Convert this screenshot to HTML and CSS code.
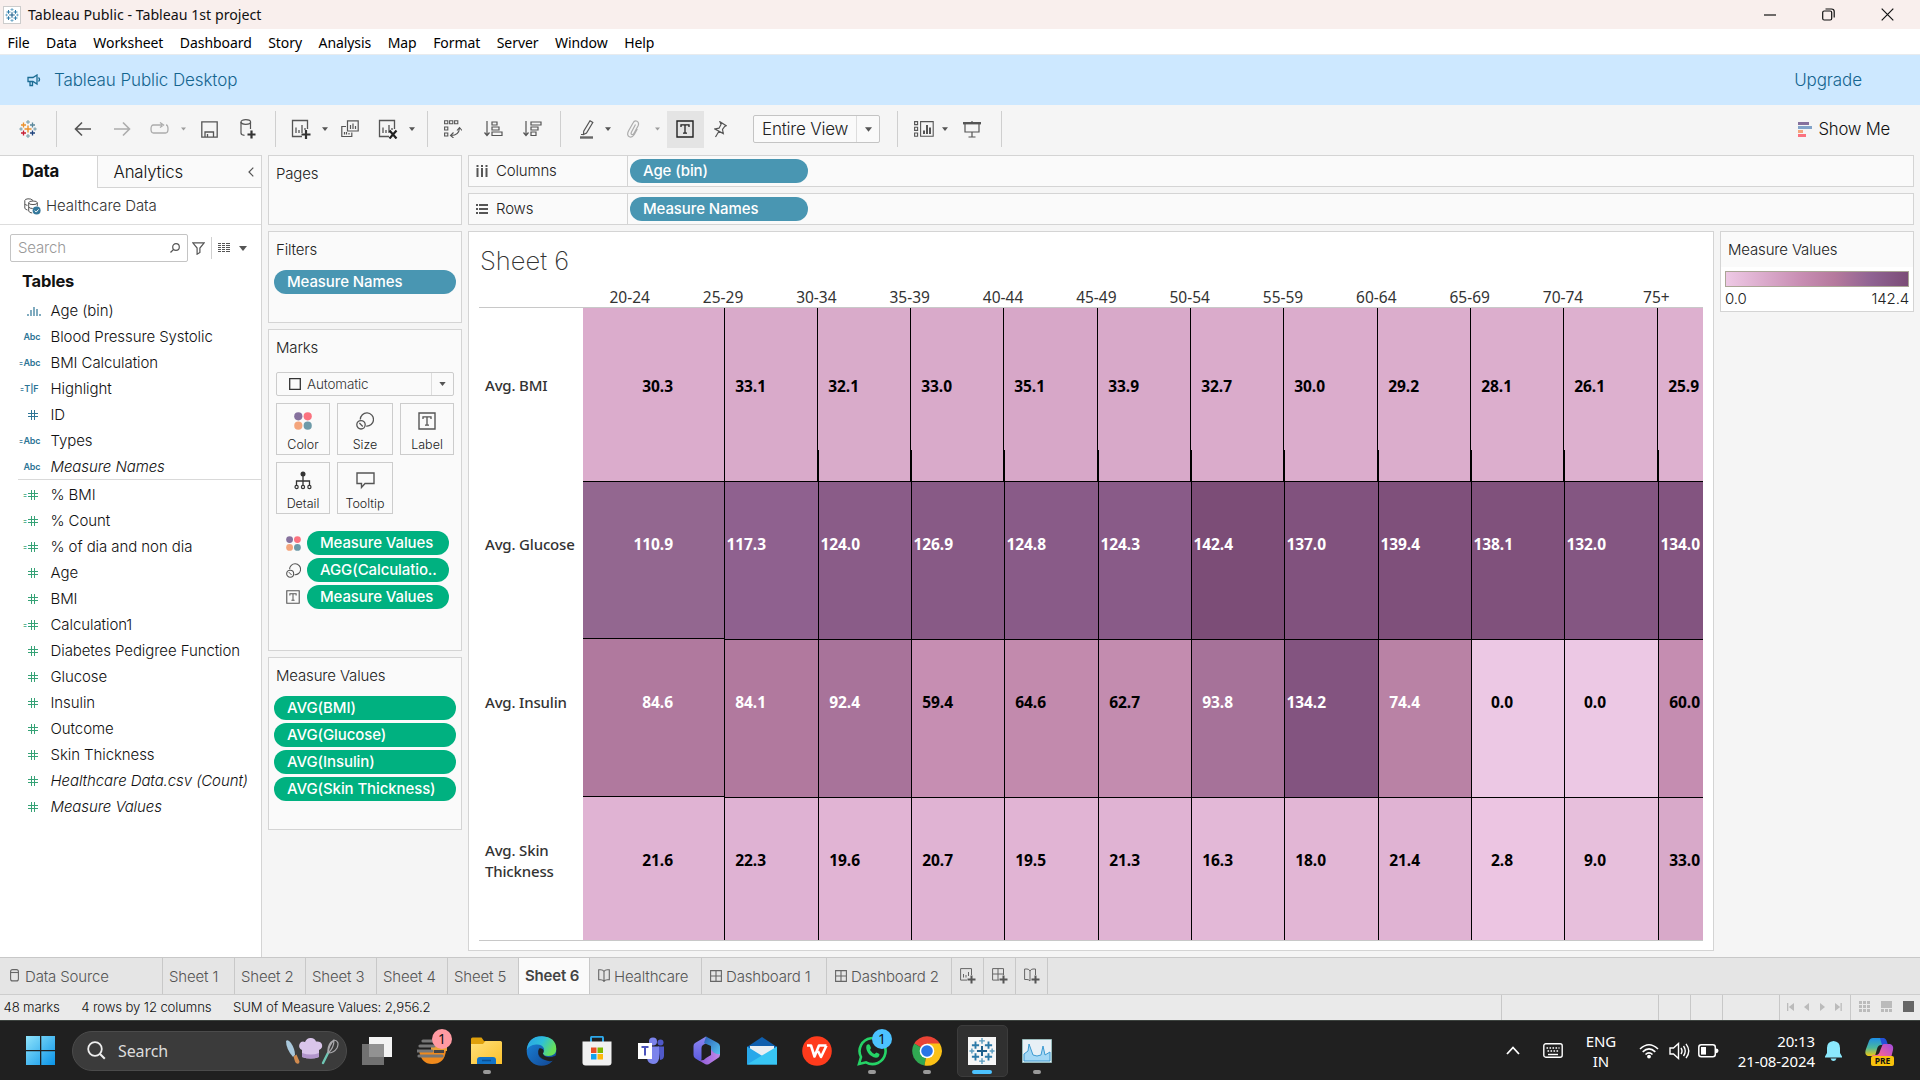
FILE: index.html
```
<!DOCTYPE html>
<html lang="en">
<head>
<meta charset="utf-8">
<title>Tableau Public - Tableau 1st project</title>
<link rel="stylesheet" href="styles.css">
</head>
<body>
<svg class="defs" width="0" height="0">
  <symbol id="caret" viewBox="0 0 8 5"><path d="M0 0h8L4 5z" fill="currentColor"/></symbol>
  <symbol id="hash" viewBox="0 0 10 10"><path d="M3.5 0v10M6.5 0v10M0 3.5h10M0 6.5h10" stroke="currentColor" fill="none"/></symbol>
  <symbol id="tlogo" viewBox="0 0 18 18">
    <path d="M9 5.5v7M5.5 9h7" stroke="var(--c1,#eb912c)" stroke-width="1.4"/>
    <path d="M4.5 2.5v5M2 5h5" stroke="var(--c2,#eb912c)" stroke-width="1.3"/>
    <path d="M13.5 2.5v5M11 5h5" stroke="var(--c3,#59879b)" stroke-width="1.3"/>
    <path d="M4.5 10.5v5M2 13h5" stroke="var(--c4,#c72035)" stroke-width="1.3"/>
    <path d="M13.5 10.5v5M11 13h5" stroke="var(--c5,#1f447e)" stroke-width="1.3"/>
    <path d="M9 0v4M7 2h4M9 14v4M7 16h4M2 7.3v3.4M.3 9h3.4M16 7.3v3.4M14.3 9h3.4" stroke="var(--c6,#7199a6)"/>
  </symbol>
  <symbol id="dots" viewBox="0 0 18 18"><circle cx="4.3" cy="4.3" r="4.1" fill="#86719d"/><circle cx="13.7" cy="4.3" r="4.1" fill="#fb727f"/><circle cx="4.3" cy="13.7" r="4.1" fill="#f4a57c"/><circle cx="13.7" cy="13.7" r="4.1" fill="#6d9aa8"/></symbol>
  <symbol id="size" viewBox="0 0 18 18"><path d="M4.3 7.5a6.6 6.6 0 1 1 5.9 6.6" fill="none" stroke="#555" stroke-width="1.3"/><circle cx="5" cy="12.8" r="4.2" fill="none" stroke="#555" stroke-width="1.3"/><path d="M3.4 11l3.4 3.5" stroke="#555" stroke-width="1.2"/></symbol>
  <symbol id="tbox" viewBox="0 0 18 18"><path d="M1 1h16v16H1z" fill="none" stroke="currentColor" stroke-width="1.4"/><path d="M5 7V4.8h8V7M9 5v8.2M7 13.2h4" fill="none" stroke="currentColor" stroke-width="1.3"/></symbol>
  <symbol id="sheet" viewBox="0 0 20 20"><path d="M16.5 10V1.5h-15v16H11M5 8.5V14M8 11v3M11 6v8M14 9v2" fill="none" stroke="currentColor" stroke-width="1.3"/></symbol>
  <symbol id="dash" viewBox="0 0 12 12"><path d="M.6.6h10.8v10.8H.6zM6 .6v10.8M.6 6h10.8" fill="none" stroke="#666" stroke-width="1.1"/></symbol>
  <symbol id="book" viewBox="0 0 12 13"><path d="M6 2.5v10M.7.8h1.8Q5 .8 6 2.5 7 .8 9.5.8h1.8v10H9.5Q7 10.8 6 12.4 5 10.8 2.500 10.800H.7z" fill="none" stroke="#666" stroke-width="1.1"/></symbol>
  <linearGradient id="gwin" x1="0" y1="0" x2="1" y2="1"><stop offset="0" stop-color="#8fe3fb"/><stop offset="1" stop-color="#0a94e8"/></linearGradient>
  <linearGradient id="gfold" x1="0" y1="0" x2="1" y2="1"><stop offset="0" stop-color="#ffe07a"/><stop offset="1" stop-color="#fcc12c"/></linearGradient>
  <linearGradient id="gedge" x1="0" y1="0" x2="1" y2=".4"><stop offset="0" stop-color="#2a9fe8"/><stop offset=".55" stop-color="#2ec0d8"/><stop offset="1" stop-color="#66e05a"/></linearGradient>
  <linearGradient id="gedge2" x1="0" y1="0" x2="1" y2="1"><stop offset="0" stop-color="#1a86dc"/><stop offset="1" stop-color="#12438f"/></linearGradient>
  <linearGradient id="g365a" x1="0" y1="0" x2="0" y2="1"><stop offset="0" stop-color="#8f86f0"/><stop offset="1" stop-color="#5a5be0"/></linearGradient>
  <linearGradient id="g365b" x1="0" y1="0" x2="1" y2="0"><stop offset="0" stop-color="#8d5ad8"/><stop offset="1" stop-color="#c48ae8"/></linearGradient>
  <linearGradient id="g365c" x1="0" y1="0" x2="1" y2="1"><stop offset="0" stop-color="#2b62b8"/><stop offset="1" stop-color="#58c4f0"/></linearGradient>
  <linearGradient id="gcop" x1="0" y1="0" x2="0" y2="1"><stop offset="0" stop-color="#1d8fe8"/><stop offset=".55" stop-color="#4cb89c"/><stop offset="1" stop-color="#f2c80f"/></linearGradient>
  <linearGradient id="gcop2" x1="1" y1="0" x2="0" y2="1"><stop offset="0" stop-color="#a04be0"/><stop offset=".6" stop-color="#f0609a"/><stop offset="1" stop-color="#f68b5a"/></linearGradient>
</svg>

<header class="titlebar">
  <span class="appicon"><svg class="blue-logo" width="14" height="14"><use href="#tlogo"/></svg></span>
  <span class="title">Tableau Public - Tableau 1st project</span>
  <div class="winbtns">
    <svg width="12" height="12"><path d="M0 6h12" stroke="#111" stroke-width="1.2"/></svg>
    <svg width="13" height="13"><rect x=".7" y="3" width="9" height="9" rx="1.5" fill="none" stroke="#111" stroke-width="1.2"/><path d="M3.500 1h6Q12.200 1 12.200 3.500v6" fill="none" stroke="#111" stroke-width="1.200"/></svg>
    <svg width="13" height="13"><path d="M.7.7l11.6 11.6M12.300.7L.7 12.300" stroke="#111" stroke-width="1.200"/></svg>
  </div>
</header>
<nav class="menubar"><span>File</span><span>Data</span><span>Worksheet</span><span>Dashboard</span><span>Story</span><span>Analysis</span><span>Map</span><span>Format</span><span>Server</span><span>Window</span><span>Help</span></nav>
<div class="banner">
  <svg width="14" height="13"><path d="M1 3.500h5L10 1v9L6 7.500H1zM3 7.500v4h2.500v-4M11.500 3.500q2 2 0 4" fill="none" stroke="#1a6b93" stroke-width="1.300"/></svg>
  <span>Tableau Public Desktop</span><span class="upgrade">Upgrade</span>
</div>

<div class="toolbar">
  <i></i>
  <svg width="18" height="20"><use href="#tlogo"/></svg>
  <b class="sep"></b>
  <svg width="17" height="16"><path d="M17 8H1.500M8 1.500L1.500 8 8 14.500" fill="none" stroke="#555" stroke-width="1.600"/></svg>
  <svg width="17" height="16" class="dim"><path d="M0 8h15.500M9 1.500L15.500 8 9 14.500" fill="none" stroke="#555" stroke-width="1.600"/></svg>
  <svg width="19" height="14" class="dim"><path d="M12 3H3.500Q1 3 1 7t2.500 4h12Q18 11 18 7t-2-4M10 .5L13.500 3 10 5.500" fill="none" stroke="#555" stroke-width="1.300"/></svg>
  <svg width="5" height="4" class="dim"><use href="#caret"/></svg>
  <svg width="17" height="17"><path d="M.8.8h15.400v15.400H.8zM4 16v-5h8.500v5M6.500 16v-3" fill="none" stroke="#555" stroke-width="1.300"/></svg>
  <svg width="17" height="20" viewBox="-1 0 17 20"><path d="M1 3v11q0 2 3.500 2.300M10.500 3v7" fill="none" stroke="#555" stroke-width="1.200"/><ellipse cx="5.800" cy="3" rx="4.800" ry="2.300" fill="none" stroke="#555" stroke-width="1.200"/><path d="M11.500 11.500v8M7.500 15.500h8" stroke="#333" stroke-width="2.200"/></svg>
  <b class="sep"></b>
  <svg width="20" height="20" class="ic"><use href="#sheet"/><path d="M15 11v9M10.500 15.500h9" stroke="#333" stroke-width="2.200"/></svg>
  <svg width="6" height="4" class="ic"><use href="#caret"/></svg>
  <svg width="18" height="18"><path d="M6.500 11V.8h10.700V11zM5 6.500H.8v10h10V12.500M9.500 5v4M12 3.500V9M14.500 6v3M3.500 12v2.500M5.500 12v2.500M8 13v1.500" fill="none" stroke="#555" stroke-width="1.200"/></svg>
  <svg width="20" height="20" class="ic"><use href="#sheet"/><path d="M11.500 11.500l7 8M18.500 11.500l-7 8" stroke="#222" stroke-width="2.200"/></svg>
  <svg width="6" height="4" class="ic"><use href="#caret"/></svg>
  <b class="sep"></b>
  <svg width="18" height="18"><path d="M.6.8h3.200v3H.6zM5.600.8h3.200v3H5.600zM10.600.8h3.200v3h-3.200zM.6 7h3.200v3H.6zM.6 13h3.200v3H.6zM7 15.500q8 0 8.500-7.500M9.500 12.500L6.500 15.500l3 2.500M13 10.500L15.500 7.500 18 10.500" fill="none" stroke="#555" stroke-width="1.100"/></svg>
  <svg width="19" height="16"><path d="M3 0v14M.5 11.500L3 14.500l2.500-3M8 1h5v3H8zM8 6h7v3H8zM8 11h10v3.500H8z" fill="none" stroke="#555" stroke-width="1.200"/></svg>
  <svg width="19" height="16"><path d="M3 0v14M.5 11.500L3 14.500l2.500-3M8 1h10v3H8zM8 6h7v3H8zM8 11h5v3.500H8z" fill="none" stroke="#555" stroke-width="1.200"/></svg>
  <b class="sep"></b>
  <svg width="14" height="19"><path d="M10 .8l2.800 1.700L6.500 13l-3 1.500.2-3.200zM3.500 14.500H1" fill="none" stroke="#555" stroke-width="1.200"/><path d="M0 17.500h13" stroke="#666" stroke-width="2.400"/></svg>
  <svg width="6" height="4" class="ic"><use href="#caret"/></svg>
  <svg width="14" height="18" class="dim"><path d="M9.500 4.500L5.500 12q-1 2 .3 2.500t2.200-1.200L12 6q1.500-3.500-1-4.700T7 3L2.500 11q-2 4.500.8 5.700t5-2.200l3-5.500" fill="none" stroke="#555" stroke-width="1.200"/></svg>
  <svg width="5" height="4" class="dim"><use href="#caret"/></svg>
  <span class="tbtn"><svg width="18" height="18"><use href="#tbox"/></svg></span>
  <svg width="13" height="17"><path d="M6 .8l6.200 4-1.500.7L8.500 8.500l.8 4L1 8l4-.8L7 3.500zM4.800 10.500L1.500 16" fill="none" stroke="#555" stroke-width="1.200"/></svg>
  <i></i>
  <span class="combo"><span>Entire View</span><em><svg width="7" height="5" class="ic"><use href="#caret"/></svg></em></span>
  <b class="sep"></b>
  <svg width="20" height="16"><path d="M.6.600h3v3H.6zM.6 6.200h3v3.200H.6zM.6 12h3v3.200H.6zM6.600.600h12.600v14.700H6.600z" fill="none" stroke="#555" stroke-width="1.100"/><path d="M10 13V9.500M13 13V4M16 13V6.500" stroke="#555" stroke-width="2"/></svg>
  <svg width="6" height="4" class="ic"><use href="#caret"/></svg>
  <svg width="18" height="17"><path d="M0 2.200h18" stroke="#555" stroke-width="2.400"/><path d="M9 0v2M2 3v8h14V3M9 11v5M5.500 16h7" fill="none" stroke="#555" stroke-width="1.200"/></svg>
  <b class="sep"></b>
  <div class="showme"><svg width="14" height="15"><path d="M0 0h11v3H0z" fill="#86719d"/><path d="M0 4h14v3H0z" fill="#82a3c9"/><path d="M0 8h5v3H0z" fill="#f4a57c"/><path d="M0 12h8v3H0z" fill="#fb727f"/></svg><span>Show Me</span></div>
</div>

<main class="work">
  <aside class="datapane">
    <div class="ptabs"><div class="ptab on">Data</div><div class="ptab">Analytics<svg width="6" height="10"><path d="M5.300.7L1 5l4.300 4.300" fill="none" stroke="#555" stroke-width="1.200"/></svg></div></div>
    <div class="source"><svg width="17" height="17" viewBox="0 0 17 17"><path d="M9 2.500Q7 .5 4 .8 1 1 .8 2.500V10q.3 1.600 2.700 2M.8 6q.6 1.300 2.700 1.300" fill="none" stroke="#555"/><ellipse cx="9" cy="4.800" rx="4.300" ry="1.800" fill="none" stroke="#555"/><path d="M4.700 4.800v8.200q.5 1.800 3.500 2M4.700 9q1 1.500 4 1.500M13.300 4.800v3.500" fill="none" stroke="#555"/><circle cx="12.600" cy="12.600" r="4" fill="#34789b"/><path d="M10.800 12.600l1.400 1.500 2.400-2.700" fill="none" stroke="#fff"/></svg><span>Healthcare Data</span></div>
    <div class="searchrow">
      <div class="sbox"><span>Search</span><svg width="10" height="10"><circle cx="6" cy="4" r="3.300" fill="none" stroke="#555" stroke-width="1.200"/><path d="M3.600 6.400L.5 9.500" stroke="#555" stroke-width="1.300"/></svg></div>
      <svg class="funnel" width="13" height="13"><path d="M.8.8h11.400L7.900 6v4.500l-2.800 1.700V6z" fill="none" stroke="#555" stroke-width="1.200"/></svg>
      <b></b>
      <svg class="grid" width="12" height="10"><path d="M0 .5h3M4 .5h3M8 .5h4M0 2.500h3M4 2.500h3M8 2.500h4M0 4.500h3M4 4.500h3M8 4.500h4M0 6.500h3M4 6.500h3M8 6.500h4M0 8.500h3M4 8.500h3M8 8.500h4" stroke="#555"/></svg>
      <svg width="8" height="5" class="ic"><use href="#caret"/></svg>
    </div>
    <h3>Tables</h3>
    <ul class="fields dims">
      <li><span class="ty"><svg width="14" height="10"><path d="M1 8v2M4 4v6M7 1v9M10 3v7M13 8v2" stroke="currentColor" stroke-width="1.200"/></svg></span>Age (bin)</li>
      <li><span class="ty">Abc</span>Blood Pressure Systolic</li>
      <li><span class="ty"><small>=</small>Abc</span>BMI Calculation</li>
      <li><span class="ty tf"><small>=</small>T|F</span>Highlight</li>
      <li><span class="ty h"><svg width="10" height="10"><use href="#hash"/></svg></span>ID</li>
      <li><span class="ty"><small>=</small>Abc</span>Types</li>
      <li class="it"><span class="ty">Abc</span>Measure Names</li>
    </ul>
    <ul class="fields meas">
      <li><span class="ty h"><small>=</small><svg width="10" height="10"><use href="#hash"/></svg></span>% BMI</li>
      <li><span class="ty h"><small>=</small><svg width="10" height="10"><use href="#hash"/></svg></span>% Count</li>
      <li><span class="ty h"><small>=</small><svg width="10" height="10"><use href="#hash"/></svg></span>% of dia and non dia</li>
      <li><span class="ty h"><svg width="10" height="10"><use href="#hash"/></svg></span>Age</li>
      <li><span class="ty h"><svg width="10" height="10"><use href="#hash"/></svg></span>BMI</li>
      <li><span class="ty h"><small>=</small><svg width="10" height="10"><use href="#hash"/></svg></span>Calculation1</li>
      <li><span class="ty h"><svg width="10" height="10"><use href="#hash"/></svg></span>Diabetes Pedigree Function</li>
      <li><span class="ty h"><svg width="10" height="10"><use href="#hash"/></svg></span>Glucose</li>
      <li><span class="ty h"><svg width="10" height="10"><use href="#hash"/></svg></span>Insulin</li>
      <li><span class="ty h"><svg width="10" height="10"><use href="#hash"/></svg></span>Outcome</li>
      <li><span class="ty h"><svg width="10" height="10"><use href="#hash"/></svg></span>Skin Thickness</li>
      <li class="it"><span class="ty h"><svg width="10" height="10"><use href="#hash"/></svg></span>Healthcare Data.csv (Count)</li>
      <li class="it"><span class="ty h"><svg width="10" height="10"><use href="#hash"/></svg></span>Measure Values</li>
    </ul>
  </aside>

  <section class="cards">
    <div class="card pages"><h4>Pages</h4></div>
    <div class="card filters"><h4>Filters</h4><div class="pill blue">Measure Names</div></div>
    <div class="card marks"><h4>Marks</h4>
      <div class="mtype"><svg width="12" height="12"><path d="M.7.7h10.600v10.600H.7z" fill="none" stroke="#333" stroke-width="1.300"/></svg><span>Automatic</span><em><svg width="7" height="4" class="ic"><use href="#caret"/></svg></em></div>
      <div class="mgrid">
        <div><svg width="18" height="18"><use href="#dots"/></svg>Color</div>
        <div><svg width="18" height="18"><use href="#size"/></svg>Size</div>
        <div><svg width="18" height="18" class="ic"><use href="#tbox"/></svg>Label</div>
        <div><svg width="18" height="19"><circle cx="9" cy="3" r="2.500" fill="#333"/><path d="M9 5v9M2.500 14v-4h13v4" fill="none" stroke="#333" stroke-width="1.300"/><g fill="none" stroke="#333" stroke-width="1.200"><circle cx="2.600" cy="16" r="1.600"/><circle cx="9" cy="16" r="1.600"/><circle cx="15.400" cy="16" r="1.600"/></g></svg>Detail</div>
        <div><svg width="19" height="19"><path d="M1 2h17v10.500H9L5.500 16.500v-4H1z" fill="none" stroke="#555" stroke-width="1.400"/></svg>Tooltip</div>
      </div>
      <div class="mpills">
        <div><svg width="15" height="15"><use href="#dots"/></svg><span class="pill green">Measure Values</span></div>
        <div><svg width="15" height="15"><use href="#size"/></svg><span class="pill green">AGG(Calculatio..</span></div>
        <div><svg width="14" height="14" class="ic"><use href="#tbox"/></svg><span class="pill green">Measure Values</span></div>
      </div>
    </div>
    <div class="card mvals"><h4>Measure Values</h4>
      <div class="pill green">AVG(BMI)</div><div class="pill green">AVG(Glucose)</div><div class="pill green">AVG(Insulin)</div><div class="pill green">AVG(Skin Thickness)</div>
    </div>
  </section>

  <section class="canvas">
    <div class="shelf"><div class="sl"><svg width="12" height="12"><path d="M1.500 0v2M6 0v2M10.500 0v2M1.500 3v9M6 3v9M10.500 3v9" stroke="#555" stroke-width="2"/></svg>Columns</div><div class="pill blue">Age (bin)</div></div>
    <div class="shelf"><div class="sl"><svg width="12" height="12"><path d="M0 2h2M0 6h2M0 10h2M3 2h9M3 6h9M3 10h9" stroke="#555" stroke-width="2"/></svg>Rows</div><div class="pill blue">Measure Names</div></div>
    <div class="viewrow">
      <div class="view">
        <h1>Sheet 6</h1>
        <div class="heads"><span>20-24</span><span>25-29</span><span>30-34</span><span>35-39</span><span>40-44</span><span>45-49</span><span>50-54</span><span>55-59</span><span>60-64</span><span>65-69</span><span>70-74</span><span>75+</span></div>
        <div class="viz">
          <div class="vrow r1"><label>Avg. BMI</label><div class="cells">
            <p style="background:#dbaccc"><b>30.3</b></p><p style="background:#d9aaca"><b>33.1</b></p><p style="background:#d9abca"><b>32.1</b></p><p style="background:#d9aaca"><b>33.0</b></p><p style="background:#d7a7c8"><b>35.1</b></p><p style="background:#d8a9c9"><b>33.9</b></p><p style="background:#daabcb"><b>32.7</b></p><p style="background:#dbaccc"><b>30.0</b></p><p style="background:#dbadcc"><b>29.2</b></p><p style="background:#dcaecd"><b>28.1</b></p><p style="background:#ddb0cf"><b>26.1</b></p><p style="background:#ddb0cf"><b>25.9</b></p></div></div>
          <div class="vrow r2"><label>Avg. Glucose</label><div class="cells lt">
            <p style="background:#936790"><b>110.9</b></p><p style="background:#8f618f"><b>117.3</b></p><p style="background:#8a5c88"><b>124.0</b></p><p style="background:#885a86"><b>126.9</b></p><p style="background:#895b88"><b>124.8</b></p><p style="background:#895b88"><b>124.3</b></p><p style="background:#7c4d77"><b>142.4</b></p><p style="background:#81527e"><b>137.0</b></p><p style="background:#7f507b"><b>139.4</b></p><p style="background:#80517c"><b>138.1</b></p><p style="background:#845682"><b>132.0</b></p><p style="background:#835480"><b>134.0</b></p></div></div>
          <div class="vrow r3"><label>Avg. Insulin</label><div class="cells">
            <p class="lt" style="background:#b0799e"><b>84.6</b></p><p class="lt" style="background:#b1799e"><b>84.1</b></p><p class="lt" style="background:#a8739a"><b>92.4</b></p><p style="background:#c68eb2"><b>59.4</b></p><p style="background:#c28aad"><b>64.6</b></p><p style="background:#c38caf"><b>62.7</b></p><p class="lt" style="background:#a67299"><b>93.8</b></p><p class="lt" style="background:#835480"><b>134.2</b></p><p class="lt" style="background:#b982a5"><b>74.4</b></p><p style="background:#ecc8e4"><b>0.0</b></p><p style="background:#ecc8e4"><b>0.0</b></p><p style="background:#c58db1"><b>60.0</b></p></div></div>
          <div class="vrow r4"><label>Avg. Skin<br>Thickness</label><div class="cells">
            <p style="background:#e0b3d3"><b>21.6</b></p><p style="background:#dfb2d3"><b>22.3</b></p><p style="background:#e1b4d4"><b>19.6</b></p><p style="background:#e0b3d3"><b>20.7</b></p><p style="background:#e1b4d4"><b>19.5</b></p><p style="background:#e0b3d3"><b>21.3</b></p><p style="background:#e3b8d7"><b>16.3</b></p><p style="background:#e2b6d5"><b>18.0</b></p><p style="background:#e0b3d3"><b>21.4</b></p><p style="background:#ecc5e2"><b>2.8</b></p><p style="background:#e7bfdc"><b>9.0</b></p><p style="background:#d8a9c9"><b>33.0</b></p></div></div>
        </div>
      </div>
      <div class="legend"><h4>Measure Values</h4><div class="ramp"></div><div class="ends"><span>0.0</span><span>142.4</span></div></div>
    </div>
  </section>
</main>

<nav class="tabs">
  <div class="ds"><svg width="9" height="13"><rect x=".6" y=".6" width="7.800" height="11.300" rx="2" fill="none" stroke="#666" stroke-width="1.100"/><path d="M.6 3.500h7.800" stroke="#666" stroke-width="1.100"/></svg>Data Source</div>
  <div class="sh">Sheet 1</div><div class="sh">Sheet 2</div><div class="sh">Sheet 3</div><div class="sh">Sheet 4</div><div class="sh">Sheet 5</div><div class="sh on">Sheet 6</div>
  <div class="st"><svg width="12" height="13"><use href="#book"/></svg>Healthcare</div>
  <div class="db"><svg width="12" height="12"><use href="#dash"/></svg>Dashboard 1</div>
  <div class="db"><svg width="12" height="12"><use href="#dash"/></svg>Dashboard 2</div>
  <div class="nw"><svg width="16" height="16"><path d="M11.500 7V.6H.6v11.500H7M3.500 6v3.500M6 7v2.500M8.500 4v4" fill="none" stroke="#666"/><path d="M11.500 7.500v8M7.500 11.500h8" stroke="#555" stroke-width="2"/></svg></div>
  <div class="nw"><svg width="16" height="16"><path d="M11.500 7V.6H.6v11.500H7M6 .6V12M.6 6h10.800" fill="none" stroke="#666"/><path d="M11.500 7.500v8M7.500 11.500h8" stroke="#555" stroke-width="2"/></svg></div>
  <div class="nw"><svg width="16" height="16"><path d="M6 3v10M11.500 7V1H9Q7 1 6 3 5 1 3 1H.6v10.500H3q2 0 3 1.500" fill="none" stroke="#666"/><path d="M11.500 7.500v8M7.500 11.500h8" stroke="#555" stroke-width="2"/></svg></div>
</nav>
<div class="status">
  <span>48 marks</span><span>4 rows by 12 columns</span><span>SUM of Measure Values: 2,956.2</span>
  <div class="slots"><i></i><i></i><i></i><i></i>
    <i class="nav"><svg width="56" height="8" fill="#bbb"><path d="M0 0h1.300v8H0zM7 0v8L1.800 4zM22 0v8l-5-4zM33 0v8l5-4zM48 0v8l5.200-4zM53.500 0h1.300v8h-1.300z"/></svg></i>
    <i class="vw"><svg width="11" height="11" fill="#bbb"><path d="M0 0h3v3H0zM4 0h3v3H4zM8 0h3v3H8zM0 4h3v3H0zM4 4h3v3H4zM8 4h3v3H8zM0 8h3v3H0zM4 8h3v3H4zM8 8h3v3H8z"/></svg><svg width="11" height="11" fill="#bbb"><path d="M0 0h11v7H0zM0 8h3v3H0zM4 8h3v3H4zM8 8h3v3H8z"/></svg><svg width="11" height="11"><path d="M0 0h11v11H0z" fill="#666"/></svg></i>
  </div>
</div>

<footer class="taskbar">
  <svg width="29" height="29"><path d="M0 0h14v14H0zM15.300 0H29v14H15.300zM0 15.300h14V29H0zM15.300 15.300H29V29H15.300z" fill="url(#gwin)"/></svg>
  <div class="wsearch"><svg width="19" height="19"><circle cx="8" cy="8" r="6.800" fill="none" stroke="#eee" stroke-width="1.800"/><path d="M12.800 12.800l5 5" stroke="#eee" stroke-width="2"/></svg><span>Search</span>
    <svg width="54" height="28"><path d="M1 4q2-2 5 2 4 6 4 12L8 20Q1 12 1 4z" fill="#a9c8dc"/><path d="M8.500 19.500l3-2 3 7q0 2.500-2 2.300t-2.500-2.300z" fill="#d08a4e"/><path d="M17 20V13q-4-2-2.500-6 1.800-3.500 5.500-2 2-4.500 6-4 3.800 0 5 3.500 5-.5 6 3t-3 5.500v7q-8 3-17 0z" fill="#d9c5ea"/><path d="M17 16q9 3 17 0v4q-8 3-17 0z" fill="#b195cb"/><path d="M38 26l5-10" stroke="#6fc6b4" stroke-width="2.400" stroke-linecap="round"/><path d="M43 16Q42 7 49 3q6 1 3 8-3 5-9 5zm0 0q1-8 6-13m-6 13q6-5 6-13" fill="none" stroke="#aaa9ad" stroke-width="1.200"/></svg></div>
  <div class="apps">
    <div><svg width="30" height="28"><path d="M7 0h23v20H7z" fill="#f3f3f3"/><path d="M0 7h22v21H0z" fill="#808080" opacity=".85"/></svg></div>
    <div><svg width="30" height="28"><path d="M2 13h27q-1 14-14 14Q4 27 2 13z" fill="#f08a1d"/><path d="M14 9h16v5H14z" fill="#e9a13a"/><path d="M6 4h12M3 9h14M0 14h15M2 19h23" stroke="#777" stroke-width="3.200" stroke-linecap="round"/><path d="M17 13h10v3H17z" fill="#444"/></svg><em class="badge pink">1</em></div>
    <div class="run"><svg width="31" height="28"><path d="M0 2q0-1.500 1.500-1.500h9L13 4h8v6H0z" fill="#dfa00c"/><path d="M0 7h12l2.500-3H29.500Q31 4 31 5.500V27H0z" fill="url(#gfold)"/><path d="M6 27v-4q0-3 3-3h13q3 0 3 3v4z" fill="#1173c8"/><path d="M11 23.500h9" stroke="#0a4f93" stroke-width="1.500"/></svg></div>
    <div><svg width="31" height="30"><circle cx="15.500" cy="15" r="14.800" fill="url(#gedge2)"/><path d="M.7 14Q2 .2 16 .2 30 1 30.300 13q0 7-8 7-5 0-5.500-2.500 2-2 1.200-5Q16 8 10 8.500 3 9 .7 14z" fill="url(#gedge)"/><path d="M17 17.500q1 3.500 6 3.500 3.500 0 6-1.500-2 2.800-4 4-8 2-12-3-2-4 .5-7.500 4.500.5 3.500 4.500z" fill="#173a73"/><path d="M13 12.500q4-1 4.700 2.300-.2 2-1 3 1.500 3.400 6.300 3.400 3.500 0 6.500-1.500l1.500 1.300-3 3.500q-5 1.500-9-.5-5.500-2.500-6.500-6-.7-3 .5-5.500z" fill="#202020"/></svg></div>
    <div><svg width="30" height="30"><path d="M9 6V2q0-1.200 1.200-1.200h9.600Q21 .8 21 2v4" fill="none" stroke="#2da7e8" stroke-width="2"/><path d="M.5 5.500h29v21q0 3-3 3h-23q-3 0-3-3z" fill="#f1f1f1"/><path d="M9 11.500h5.500V17H9z" fill="#e74f26"/><path d="M15.500 11.500H21V17h-5.500z" fill="#7fb900"/><path d="M9 18h5.500v5.500H9z" fill="#10a3ee"/><path d="M15.500 18H21v5.500h-5.500z" fill="#fdb80a"/></svg></div>
    <div><svg width="27" height="28"><circle cx="15" cy="4.500" r="4" fill="#7b83eb"/><circle cx="22.500" cy="5.500" r="3" fill="#5059c9"/><path d="M20 9.500h6v9q0 4-4 4.500z" fill="#5059c9"/><path d="M9 9.500h12v12q-1 5.500-6 5.500-5-.5-6-5.500z" fill="#7b83eb"/><path d="M0 6h14v16H0z" fill="#fff"/><path d="M3.500 10h7M7 10v8.500" stroke="#4b53bc" stroke-width="2"/></svg></div>
    <div><svg width="28" height="29"><path d="M13 .5L2 7Q.5 8 .5 10v9q0 2.500 2 3.500l4 2.500q2 .5 2-2V12q0-2 1.500-3l6-3.500z" fill="url(#g365a)"/><path d="M13 .5l12 6.500q2 1 2 3.500v9q-6-1-9-5.500V10l-7-3z" fill="url(#g365c)"/><path d="M27 18q0 3-2 4l-9 6q-2 1-4 0l-6-3.500q5 .5 7-2.500l5-3V13q3 6 9 5z" fill="url(#g365b)"/></svg></div>
    <div><svg width="30" height="28"><path d="M0 10L15 0l15 10v4H0z" fill="#0f5fae"/><path d="M3 9h24v10H3z" fill="#e8eef3"/><path d="M0 9.500L17 20 30 9.500v18H0z" fill="#28a8ea"/><path d="M0 27.500L30 9.500v18z" fill="#38c6f4"/></svg></div>
    <div><svg width="30" height="30"><circle cx="15" cy="15" r="14.800" fill="#ff3b1c"/><path d="M5 9.500h4l3.500 11L17 9.500h7.500M16 15l3 6 5.500-11.500" fill="none" stroke="#fff" stroke-width="2.600" stroke-linejoin="round"/></svg></div>
    <div class="run"><svg width="30" height="30"><path d="M2 28l2-7A13 13 0 1 1 9 26.300z" fill="#202020" stroke="#25d366" stroke-width="2.600"/><path d="M9.500 9.500q2-2.500 3.500 0l1 2.500-1 2q2 3 4.500 4l2-1.500 3 1.500q0 3.500-3.500 3.800-5-.8-8-5-2.500-4-1.500-7.300z" fill="#25d366"/></svg><em class="badge sky">1</em></div>
    <div class="run"><svg width="30" height="30"><path d="M15 15L2.200 7.600A14.800 14.800 0 0 1 27.800 7.600z" fill="#ea4335"/><path d="M15 15L2.200 7.600a14.800 14.800 0 0 0 10.300 22z" fill="#30a852"/><path d="M15 15L12.500 29.600A14.800 14.800 0 0 0 27.800 7.600H15z" fill="#fbc116"/><circle cx="15" cy="15" r="7.300" fill="#fff"/><circle cx="15" cy="15" r="5.800" fill="#2a75e6"/></svg></div>
    <div class="run act"><span><svg class="blue-logo" width="26" height="26"><use href="#tlogo"/></svg></span></div>
    <div class="run"><svg width="30" height="24"><path d="M.5.5h29v23H.5z" fill="#e8f0f6" stroke="#9bb"/><path d="M2 15l4-3 1-7 4 11 4 1 4-1 2-9 2 9 5-3v9H2z" fill="#a5d8f5" stroke="#3d9ad1"/></svg></div>
  </div>
  <div class="tray">
    <svg width="14" height="9"><path d="M1 8l6-6.500L13 8" fill="none" stroke="#fff" stroke-width="1.800"/></svg>
    <svg width="20" height="16"><rect x=".8" y=".8" width="18.400" height="13.400" rx="2" fill="none" stroke="#fff" stroke-width="1.400"/><path d="M3.500 5h13M4.500 8h11" stroke="#fff" stroke-width="1.600" stroke-dasharray="1.600 1.400"/><path d="M5 11.500h10" stroke="#fff" stroke-width="1.400"/></svg>
    <div class="lang">ENG<br>IN</div>
    <svg width="20" height="16"><path d="M1 6Q10-2.500 19 6M3.700 8.800q6.300-6 12.600 0M6.500 11.500q3.500-3.300 7 0" fill="none" stroke="#fff" stroke-width="1.600"/><circle cx="10" cy="13.600" r="1.900" fill="#fff"/></svg>
    <svg width="21" height="18"><path d="M1 6h3.500L9.500 1.500v15L4.500 12H1z" fill="none" stroke="#fff" stroke-width="1.400"/><path d="M12 6q2 3 0 6M14.500 4q3.500 5 0 10M17 1.800q5.500 7.200 0 14.400" fill="none" stroke="#fff" stroke-width="1.400"/></svg>
    <svg width="21" height="14"><rect x=".8" y=".8" width="16.500" height="12" rx="2.500" fill="none" stroke="#fff" stroke-width="1.500"/><path d="M3 3h5v7.600H3z" fill="#fff"/><path d="M18 4.500q2.500 0 2.500 2.300T18 9.200z" fill="#fff"/></svg>
    <div class="clock">20:13<br>21-08-2024</div>
    <svg width="17" height="20"><path d="M8.500 0Q15 .5 15 7v5l2 3.500v1H0v-1L2 12V7Q2 .5 8.500 0zM5.500 17.500h6q-1 2.500-3 2.500t-3-2.500z" fill="#8be8fc"/></svg>
    <div class="copilot"><svg width="29" height="28"><path d="M8 1h9q3 0 4 4l1 3h-6q-3 0-4 4l-2 7H3Q-1 18 1 12L4 4q1-3 4-3z" fill="url(#gcop)"/><path d="M15 1h3q3 0 4 4l1 3h-6z" fill="#2350d8"/><path d="M19 7h6q4 1 3 6l-2 8q-1 4-5 4h-9q-3 0-4-4l-1-3h4q3 0 4-4l2-5q.5-2 2-2z" fill="url(#gcop2)"/></svg><em>PRE</em></div>
  </div>
</footer>
</body>
</html>
```
FILE: styles.css
```
*{box-sizing:border-box}
body{margin:0;width:1920px;height:1080px;overflow:hidden;font:350 15px/18px Inter,"Noto Sans",sans-serif;letter-spacing:-.16px;color:#333;background:#f5f5f5;display:flex;flex-direction:column}
h1,h3,h4,p,ul{margin:0;padding:0}
i,em{font-style:normal}
svg{flex:none;display:block}
.defs{position:absolute}
.ic{color:#555}
.dim{opacity:.45}
.blue-logo{--c1:#1f5f8b;--c2:#2d7aa8;--c3:#2d7aa8;--c4:#2d7aa8;--c5:#2d7aa8;--c6:#5a9cc0}

.titlebar{height:29px;background:#f9efed;display:flex;align-items:center;padding-left:3px;flex:none;font:400 14.2px/18px "Noto Sans",sans-serif;letter-spacing:0;color:#111}
.appicon{width:18px;height:18px;background:#fff;border:1px solid #ccc;display:grid;place-items:center;margin-right:7px}
.winbtns{margin-left:auto;display:flex;gap:46px;padding-right:26px;align-items:center}
.menubar{height:26px;background:#fff;border-bottom:1px solid #e8ebee;display:flex;gap:16.500px;padding:2px 0 0 7.500px;align-items:center;flex:none;font:400 14px/18px "Noto Sans",sans-serif;letter-spacing:-.07px;color:#000}
.banner{height:50px;background:#cde8ff;display:flex;align-items:center;padding:0 58px 0 27px;flex:none;font-size:17px;font-weight:300;letter-spacing:-.1px;color:#14658f}
.banner svg{margin-right:13px}
.upgrade{margin-left:auto}

.toolbar{height:50px;padding-bottom:2px;flex:none;display:grid;grid-template-columns:3px 49px 8px 44px 36px 38px 10px 42px 34px 22px 30px 18px 32px 44px 4px 26px 26px 54px 24px 32px 22px 20px 30px 18px 38px 32px 17px 127px 34px 20px 22px 32px 26px 1fr;align-items:center;justify-items:center}
.toolbar>*{margin-left:-20px;margin-right:-20px}
.sep{width:1px;height:36px;background:#cfcfcf}
.tbtn{width:37px;height:37px;background:#e4e4e4;color:#222;display:grid;place-items:center}
.combo{width:127px;height:28px;border:1px solid #c4c4c4;border-radius:2px;background:#fafafa;display:flex;font-size:17px;font-weight:300;letter-spacing:-.2px;color:#222;line-height:27px}
.combo span{width:103px;padding-left:8px;border-right:1px solid #ddd}
.combo em,.mtype em{flex:1;display:grid;place-items:center}
.toolbar .showme{justify-self:end;margin-right:30px;display:flex;gap:6px;align-items:center;font-size:16.700px;letter-spacing:-.2px;color:#111}

.work{flex:1;display:flex;min-height:0}
.datapane{width:262px;height:802px;background:#fff;border-right:1px solid #d4d4d4;border-top:1px solid #d4d4d4;color:#111}
.ptabs{display:flex;height:32px}
.ptab{width:164px;border-left:1px solid #d4d4d4;border-bottom:1px solid #d4d4d4;background:#fafafa;font-size:16.800px;padding:0 7px 0 15.500px;display:flex;align-items:center;justify-content:space-between}
.ptab.on{width:97px;background:#fff;border:0;font-weight:700;padding:0 0 2px 22px;letter-spacing:-.2px}
.source{height:37px;border-bottom:1px solid #ddd;padding-left:24px;display:flex;align-items:center;gap:5px;color:#333;font-weight:300;letter-spacing:-.08px}
.searchrow{display:flex;align-items:center;padding:9px 0 0 10px}
.sbox{width:178px;height:28px;border:1px solid #c4c4c4;border-radius:2px;display:flex;align-items:center;justify-content:space-between;padding:0 7px;color:#999;font-weight:300}
.funnel{margin:0 6px 0 4px}
.searchrow b{width:1px;height:22px;background:#d0d0d0}
.grid{margin:0 9px 0 6px}
.datapane h3{font-size:16.500px;line-height:20px;letter-spacing:-.2px;padding:9px 0 7px 22px}
.fields{list-style:none;letter-spacing:-.08px}
.fields li{height:26px;display:flex;align-items:center;white-space:nowrap}
.fields .it{font-style:italic}
.dims{border-bottom:1px solid #d9d9d9;margin-left:18px;height:182px}
.dims li{margin-left:-18px}
.meas{padding-top:2px}
.ty{width:50.500px;padding-right:10px;display:flex;justify-content:flex-end;align-items:center;font:600 9px/12px Inter,sans-serif;color:#2e7596;letter-spacing:-.1px}
.ty small{font-size:6px;line-height:12px;margin-right:.5px}
.ty.tf{padding-right:12px}
.ty.h{padding-right:13px}
.meas .ty{color:#35a276}

.cards{width:194px;margin-left:6px;display:flex;flex-direction:column;gap:6px;flex:none}
.card{background:#fafafa;border:1px solid #d4d4d4;padding:9px 5px 0}
h4{font-size:15px;font-weight:300;line-height:18px;padding-left:2px;color:#222}
.pages{height:70px}.filters{height:92px}.marks{height:322px}.mvals{height:173px}
.pill{height:24px;border-radius:12px;color:#fff;font-weight:500;line-height:24px;padding-left:13px;white-space:nowrap;letter-spacing:-.1px}
.blue{background:#4996b2}.green{background:#00b180}
.filters .pill,.mvals .pill{margin:0 0 3px}
.filters h4{margin-bottom:11px}.mvals h4{margin-bottom:11px}
.marks h4{margin-bottom:15px}
.mtype{height:24px;width:178px;margin-left:2px;border:1px solid #ccc;border-radius:2px;display:flex;align-items:center;padding-left:12px;font-weight:300;font-size:13.500px;color:#333}
.mtype span{flex:0 0 125px;margin-left:6px;height:22px;line-height:22px;border-right:1px solid #ddd}
.mgrid{display:grid;grid-template-columns:54px 56px 54px;grid-auto-rows:52px;gap:7px;margin:7px 0 0 2px}
.mgrid div{border:1px solid #ccc;display:flex;flex-direction:column;align-items:center;justify-content:space-between;padding:8px 0 0;font-size:12.500px;line-height:18px;letter-spacing:0;color:#222}
.mpills{margin:17px 0 0 12px;display:flex;flex-direction:column;gap:3px}
.mpills div{display:flex;align-items:center;justify-content:space-between;width:163px}
.mpills .pill{width:142px}

.canvas{margin-left:6px;width:1446px;display:flex;flex-direction:column;gap:6px}
.shelf{height:32px;border:1px solid #d4d4d4;background:#fafafa;display:flex;align-items:center;gap:2px}
.sl{width:159px;height:30px;border-right:1px solid #d4d4d4;display:flex;align-items:center;gap:8px;padding-left:7px;font-weight:300;color:#222}
.shelf .pill{width:178px}
.viewrow{display:flex;gap:6px;align-items:flex-start}
.view{width:1246px;height:720px;background:#fff;border:1px solid #d4d4d4;padding:14px 10px 0;color:#333}
.view h1{font-size:25.500px;line-height:30px;font-weight:200;letter-spacing:0;padding-left:1px}
.heads{display:grid;grid-template-columns:repeat(12,93.330px);justify-content:end;margin-top:11px;height:21px;border-bottom:1px solid #c8c8c8;text-align:center;font:400 15.500px/20px "Noto Sans",sans-serif;letter-spacing:0}
.viz{border-bottom:1px solid #c8c8c8;height:633px}
.vrow{display:flex;justify-content:space-between}
.vrow label{width:104px;padding-left:6px;align-self:center;font:500 15px/21px "Noto Sans",sans-serif;letter-spacing:-.18px;color:#333}
.cells{display:grid;width:1120px;color:#000}
.cells p{border-right:1px solid #000;border-bottom:1px solid #000;position:relative}
.cells p:last-child{border-right:0}
.cells b{display:block;width:41px;text-align:right;font:700 15.500px/20px "Noto Sans",sans-serif;letter-spacing:-.05px}
.cells p:first-child b{width:90px}
.lt{color:#fff}
.r1 .cells{height:174px;grid-template-columns:142px 93px 93px 93px 94px 93px 93px 94px 93px 93px 94px 45px}
.r1 b{padding-top:68px}
.r1 label{padding-bottom:19px}
.r1 p:nth-child(n+2):nth-child(-n+11)::after{content:"";position:absolute;right:-2px;bottom:-1px;width:1px;height:32px;background:#000;z-index:1}
.r2 .cells,.r3 .cells,.r4 .cells{grid-template-columns:142px 94px 93px 93px 94px 93px 93px 94px 93px 93px 94px 44px}
.r2 .cells,.r3 .cells{height:158px}
.r2 b,.r3 b,.r4 b{padding-top:52px}
.cells .lt:first-child b,.r3 p:first-child b,.r4 p:first-child b{padding-top:53px}
.r2 p:first-child{height:157px}
.r3 p:first-child,.r4 p:first-child{margin-top:-1px}
.r3 p:first-child{height:158px}
.r2 label,.r3 label{padding-bottom:33px}
.r4 .cells{height:142px}
.r4 label{padding-bottom:16px}
.r4 .cells p{border-bottom:0}
.legend{width:194px;height:81px;background:#fff;border:1px solid #d4d4d4}
.legend h4{background:#fafafa;height:35px;line-height:35px;padding-left:7px}
.ramp{height:16px;margin:4px 4px 0;border:1px solid #aaa596;background:linear-gradient(90deg,#eec9e5,#c98fb4 40%,#b5799d 60%,#8f6392 80%,#7c4d77)}
.ends{display:flex;justify-content:space-between;padding:2px 4px 0;font-weight:300;line-height:19px;color:#222}

.tabs{height:38px;background:#e5e5e5;border-top:1px solid #c8c8c8;border-bottom:1px solid #cdcdcd;display:flex;flex:none;color:#555}
.tabs>div{border-right:1px solid #c8c8c8;display:flex;align-items:center;padding-top:2px}
.tabs svg{margin-bottom:3px}
.ds{width:163px;padding-left:10px;gap:6px}
.sh{width:71px;padding-left:6px}
.ds+.sh{width:72px}
.tabs .on{background:#fafafa;font-weight:600;color:#444;padding-top:0}
.st{width:112px;padding-left:8px;gap:4px}
.db{width:125px;padding-left:8px;gap:4px}
.nw{width:32px;justify-content:center}
.status{height:25px;flex:none;background:#eaeaea;display:flex;align-items:center;gap:21.500px;padding-left:3.500px;font-size:13.200px;letter-spacing:-.15px;color:#111}
.status>span{margin-top:-2px}
.slots{margin-left:auto;display:flex;height:25px}
.slots i{border-left:1px solid #c8c8c8;width:32px}
.slots i:first-child{width:157px}
.slots i:nth-child(4){width:57px}
.slots i.nav{width:71px;padding:8px 0 0 7px}
.slots i.vw{width:70px;display:flex;gap:11px;padding:6px 0 0 8px}

.taskbar{height:60px;flex:none;background:#202020;border-top:1px solid #3c423e;display:flex;align-items:center;padding-left:26px;color:#fff;font:400 15px/20px "Noto Sans",sans-serif;letter-spacing:-.1px}
.wsearch{width:275px;height:40px;margin-left:17px;border-radius:20px;background:#3b3b3b;border:1px solid #4b4b4b;display:flex;align-items:center;padding:0 7px 0 14px;font-size:16px;color:#ddd}
.wsearch span{margin:0 auto 0 12px}
.apps{display:flex;margin-left:2px}
.apps>div{width:55px;height:59px;display:grid;place-items:center;position:relative}
.apps .run::after{content:"";position:absolute;bottom:6px;left:24px;width:8px;height:4px;border-radius:2px;background:#999}
.apps .act::after{left:18px;width:20px;background:#4cc2ff}
.act::before{content:"";position:absolute;left:3px;top:4px;width:49px;height:50px;border-radius:5px;background:#303030;border:1px solid #3c3c3c}
.act span{width:28px;height:28px;background:#f6f6f6;display:grid;place-items:center;position:relative}
.badge{position:absolute;right:7px;top:8px;width:20px;height:20px;border-radius:10px;color:#111;font-size:14px;line-height:20px;text-align:center}
.pink{background:#ff9aa2}.sky{background:#4cc2ff}
.tray{margin-left:auto;display:flex;align-items:center;padding-right:26px}
.tray>svg:nth-child(2){margin:0 0 0 23px}
.lang{width:40px;margin:0 18px 0 18px;text-align:center}
.tray>svg:nth-child(5){margin:0 8px 0 10px}
.clock{width:96px;text-align:right;margin-right:10px}
.copilot{position:relative;margin-left:23px}
.copilot em{position:absolute;left:6px;bottom:-1px;width:23px;height:10px;border-radius:2px;background:#f8c20c;color:#111;font-size:8.500px;font-weight:700;line-height:10px;text-align:center}
```
